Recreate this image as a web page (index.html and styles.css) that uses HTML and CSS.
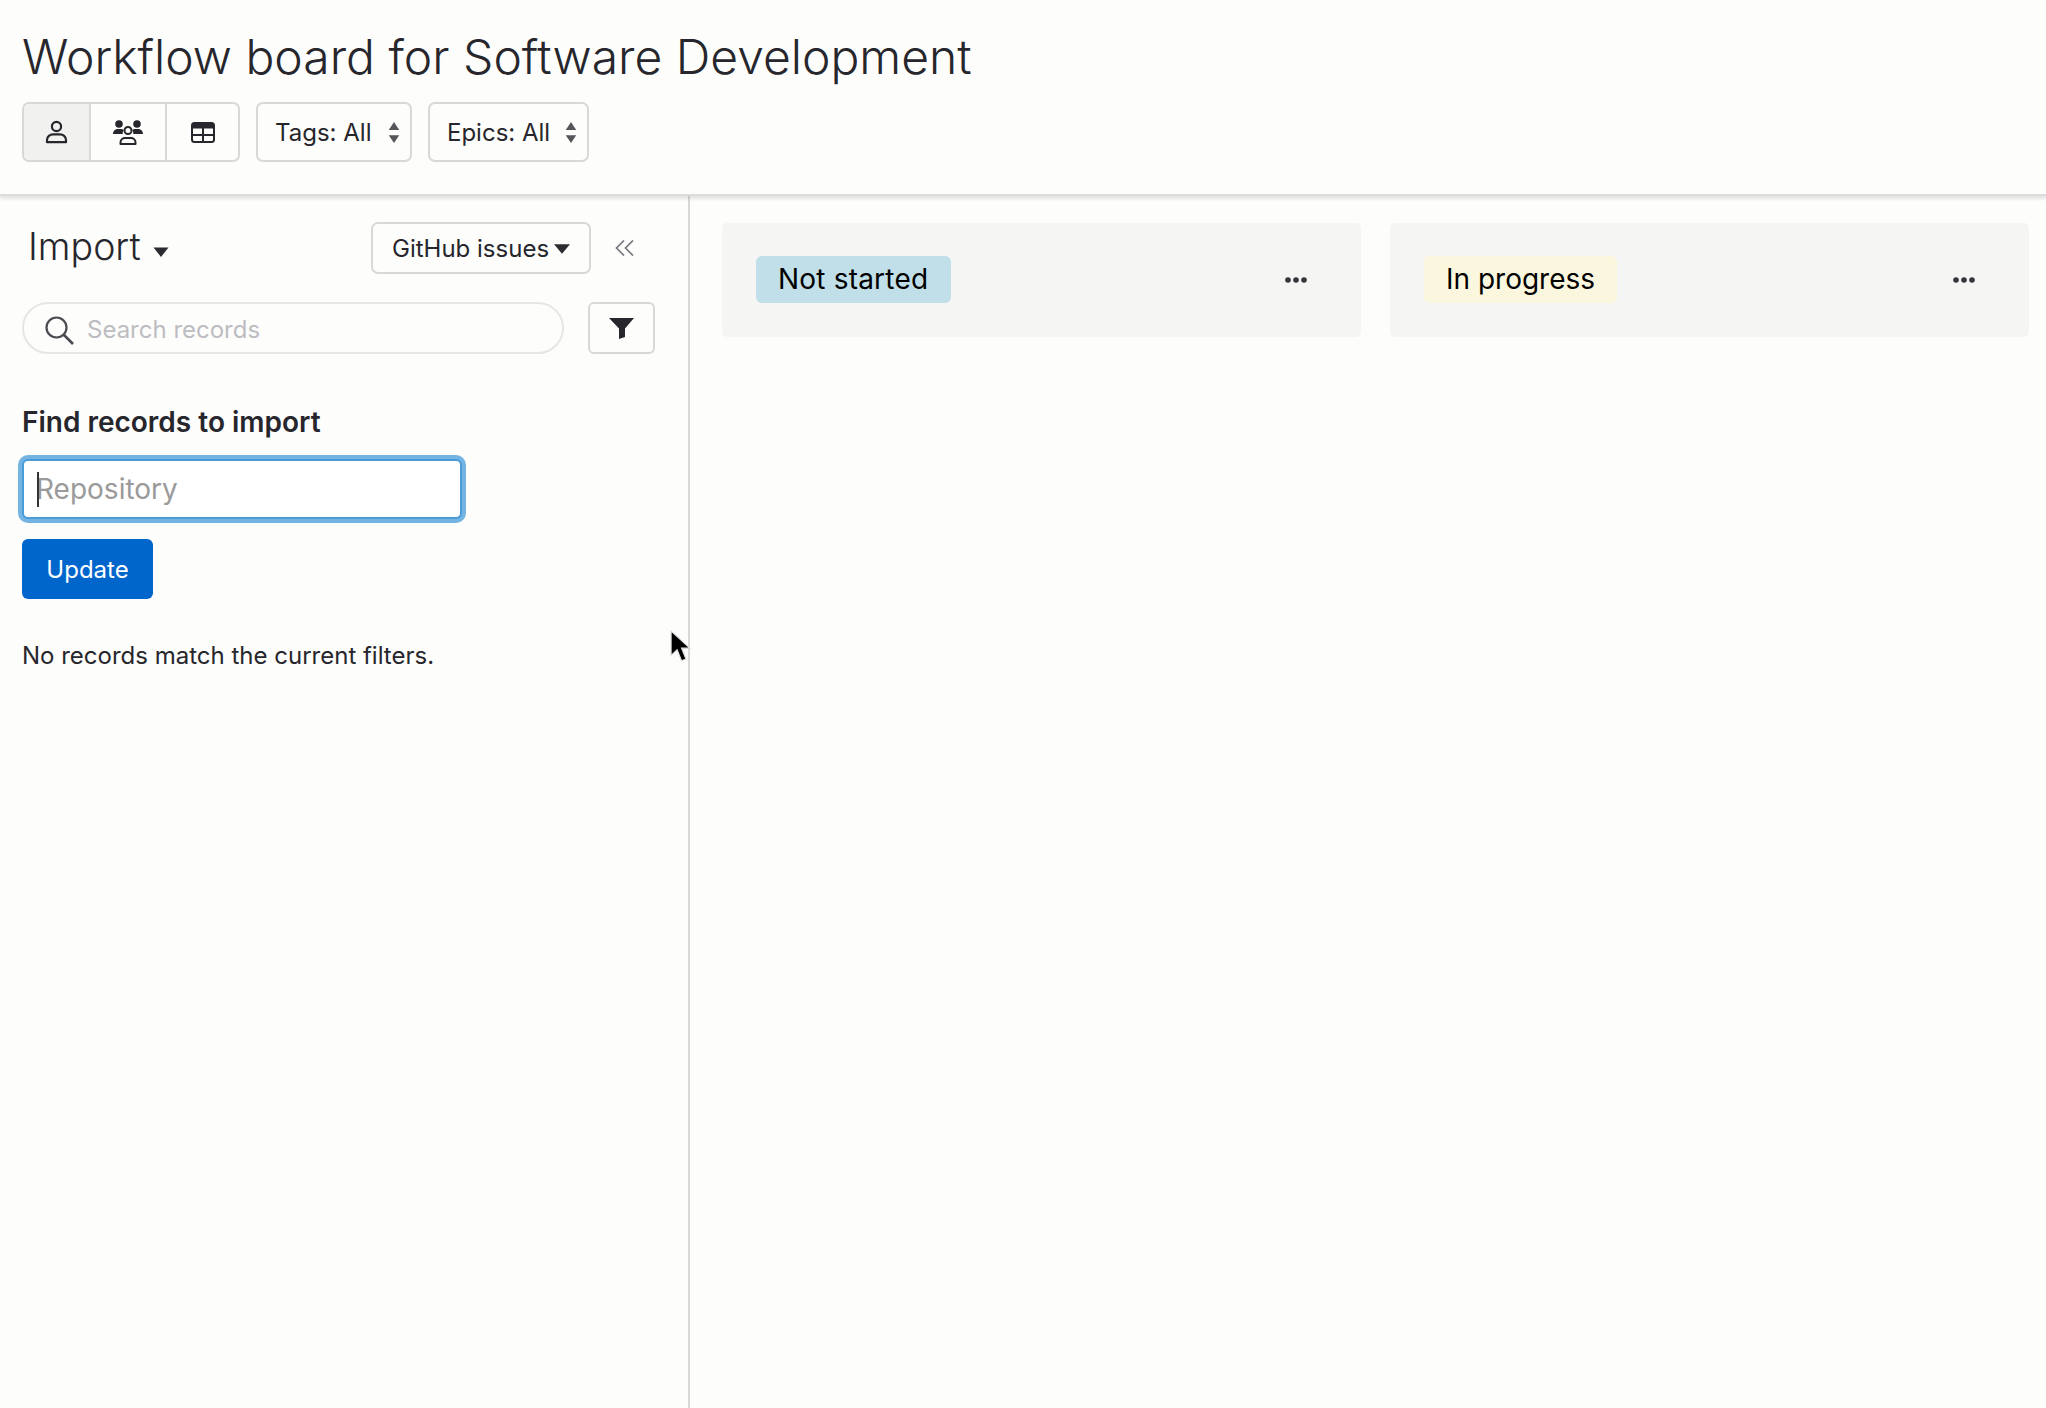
FILE: index.html
```html
<!DOCTYPE html>
<html lang="en">
<head>
  <meta charset="UTF-8" />
  <title>Workflow board for Software Development</title>
  <link rel="stylesheet" href="styles.css">
</head>
<body>

  <!-- Header -->
  <header class="top">
    <h1 class="title">Workflow board for Software Development</h1>
    <div class="toolbar">
      <div class="view-group">
        <div class="view-btn view-me active">
          <svg width="23" height="24" viewBox="0 0 23 24"><circle cx="11.5" cy="6.5" r="4.6" fill="none" stroke="#26262c" stroke-width="2.2"/><path d="M2 22.2h19v-2.2c0-3.4-3-5.6-6-5.6H8c-3 0-6 2.2-6 5.6z" fill="none" stroke="#26262c" stroke-width="2.2" stroke-linejoin="round"/></svg>
        </div>
        <div class="view-btn view-team">
          <svg width="30" height="25" viewBox="0 0 30 25"><circle cx="6" cy="4" r="3.8" fill="#26262c"/><circle cx="24" cy="4" r="3.8" fill="#26262c"/><path d="M0 14c0-3.500 2.500-5 5-5h3c1 0 2 .4 2.700 1-.8 1.200-1.100 2.600-.9 4z" fill="#26262c"/><path d="M30 14c0-3.500-2.500-5-5-5h-3c-1 0-2 .4-2.700 1 .8 1.200 1.100 2.600.9 4z" fill="#26262c"/><circle cx="15" cy="10.500" r="3.500" fill="none" stroke="#26262c" stroke-width="2"/><path d="M7.500 24h15v-1.500c0-2.800-2.300-4.500-4.500-4.500h-6c-2.200 0-4.500 1.700-4.500 4.500z" fill="none" stroke="#26262c" stroke-width="2" stroke-linejoin="round"/></svg>
        </div>
        <div class="view-btn view-table">
          <svg width="24" height="21" viewBox="0 0 24 21"><rect x="1" y="1" width="22" height="19" rx="2.500" fill="none" stroke="#26262c" stroke-width="2"/><path d="M1 3.500a2.500 2.500 0 0 1 2.500-2.500h17a2.500 2.500 0 0 1 2.500 2.500v3h-22z" fill="#26262c"/><path d="M12 6v14M1 13h22" stroke="#26262c" stroke-width="2"/></svg>
        </div>
      </div>
      <div class="select select-tags">
        <span>Tags: All</span>
        <svg class="sort" width="12" height="21" viewBox="0 0 11 20"><path d="M5.500 0l5 7.500h-10zM5.500 20l-5-7.500h10z" fill="#55555a"/></svg>
      </div>
      <div class="select select-epics">
        <span>Epics: All</span>
        <svg class="sort" width="12" height="21" viewBox="0 0 11 20"><path d="M5.500 0l5 7.500h-10zM5.500 20l-5-7.500h10z" fill="#55555a"/></svg>
      </div>
    </div>
  </header>

  <div class="main">
    <!-- Sidebar -->
    <aside class="side">
      <div class="side-head">
        <div class="import-title">Import</div>
        <svg class="import-caret" width="16" height="10" viewBox="0 0 15 10"><path d="M0 .5h15l-7.500 9.500z" fill="#2b2b30"/></svg>
        <div class="source-btn">
          <span>GitHub issues</span>
          <svg width="16" height="10" viewBox="0 0 15 9"><path d="M0 0h15l-7.500 9z" fill="#2b2b30"/></svg>
        </div>
        <svg class="collapse" width="19" height="16" viewBox="0 0 19 16"><path d="M9 .5L1.500 8 9 15.500M18 .5L10.500 8 18 15.500" fill="none" stroke="#777780" stroke-width="1.700"/></svg>
      </div>

      <div class="search-row">
        <div class="search">
          <svg class="search-icon" width="29" height="29" viewBox="0 0 29 29"><circle cx="11.500" cy="11.500" r="10" fill="none" stroke="#4a4a50" stroke-width="2.200"/><path d="M18.500 18.500L28 28" stroke="#4a4a50" stroke-width="2.600"/></svg>
          <span>Search records</span>
        </div>
        <div class="filter-btn">
          <svg width="25" height="21" viewBox="0 0 25 21"><path d="M0 0h25l-9 10.500V19l-6 2V10.500z" fill="#26262c"/></svg>
        </div>
      </div>

      <h2 class="find-title">Find records to import</h2>
      <div class="repo-wrap">
        <input class="repo" type="text" placeholder="Repository">
        <span class="text-caret"></span>
      </div>
      <button class="update">Update</button>
      <p class="empty">No records match the current filters.</p>
    </aside>

    <!-- Board -->
    <section class="board">
      <div class="column">
        <div class="pill pill-blue">Not started</div>
        <svg class="dots" width="22" height="6" viewBox="0 0 22 6"><circle cx="3" cy="3" r="2.800" fill="#34343a"/><circle cx="11" cy="3" r="2.800" fill="#34343a"/><circle cx="19" cy="3" r="2.800" fill="#34343a"/></svg>
      </div>
      <div class="column">
        <div class="pill pill-yellow">In progress</div>
        <svg class="dots" width="22" height="6" viewBox="0 0 22 6"><circle cx="3" cy="3" r="2.800" fill="#34343a"/><circle cx="11" cy="3" r="2.800" fill="#34343a"/><circle cx="19" cy="3" r="2.800" fill="#34343a"/></svg>
      </div>
    </section>
  </div>

  <!-- Mouse pointer -->
  <svg class="pointer" width="22" height="33" viewBox="0 0 20 30"><path d="M1 1v22l5.500-5 4 10 4-1.700-4-9.800H18z" fill="#000" stroke="#ddd" stroke-width="1"/></svg>
</body>
</html>
```

FILE: styles.css
```css
* { margin: 0; padding: 0; box-sizing: border-box; }
html, body {
  width: 100%;
  height: 100%;
  background-color: #fdfdfb;
  color: #26262c;
  font-family: "Inter", "Liberation Sans", sans-serif;
  overflow: hidden;
}
body {
  position: relative;
  display: flex;
  flex-direction: column;
}

/* Header */
.top {
  height: 196px;
  padding: 28px 0 0 22px;
  border-bottom: 2px solid #dcdcdc;
  box-shadow: 0 3px 3px rgba(0, 0, 0, 0.1);
  position: relative;
}
.title {
  font-size: 48px;
  font-weight: 300;
  line-height: 58px;
}
.toolbar {
  display: flex;
  margin-top: 16px;
  height: 60px;
}
.view-group {
  display: flex;
  width: 218px;
  border: 2px solid #d8d8d8;
  border-radius: 7px;
  overflow: hidden;
}
.view-btn {
  display: flex;
  align-items: center;
  justify-content: center;
}
.view-btn + .view-btn { border-left: 2px solid #d8d8d8; }
.view-me { width: 65px; }
.view-team { width: 76px; }
.view-table { flex: 1; }
.active { background: #f1f1ef; }

.select {
  display: flex;
  align-items: center;
  justify-content: space-between;
  border: 2px solid #d8d8d8;
  border-radius: 7px;
  font-size: 24px;
  padding: 0 10px 0 17px;
  height: 60px;
}
.select-tags { width: 156px; margin-left: 16px; }
.select-epics { width: 161px; margin-left: 16px; }

/* Sidebar */
.main {
  flex: 1;
  display: flex;
  min-height: 0;
}
.side {
  width: 690px;
  flex-shrink: 0;
  border-right: 2px solid #d8d8d8;
  padding: 26px 33px 0 22px;
}
.side-head {
  display: flex;
  align-items: center;
  height: 52px;
}
.import-title {
  font-size: 37.5px;
  font-weight: 300;
  margin: -3px 0 0 6px;
}
.import-caret { margin: 8px 0 0 12px; }
.source-btn {
  margin-left: auto;
  display: flex;
  align-items: center;
  gap: 5px;
  width: 220px;
  height: 52px;
  padding: 1px 0 0 19px;
  border: 2px solid #d8d8d8;
  border-radius: 7px;
  font-size: 24px;
}
.collapse { margin: 0 21px 0 24px; }

.search-row {
  display: flex;
  margin-top: 28px;
  height: 52px;
}
.search {
  width: 542px;
  display: flex;
  align-items: center;
  gap: 13px;
  padding: 2px 0 0 21px;
  border: 2px solid #e6e6e4;
  border-radius: 26px;
  font-size: 24px;
  color: #bcbcc2;
}
.search-icon { margin-top: 3px; }
.filter-btn {
  margin-left: auto;
  width: 67px;
  display: flex;
  align-items: center;
  justify-content: center;
  border: 2px solid #d8d8d8;
  border-radius: 6px;
}

.find-title {
  margin-top: 51px;
  font-size: 28px;
  font-weight: 600;
  line-height: 34px;
}
.repo-wrap {
  position: relative;
  width: 440px;
  margin-top: 20px;
}
.repo {
  display: block;
  width: 100%;
  height: 60px;
  padding: 0 12px;
  border: 2px solid #4a9cd8;
  border-radius: 6px;
  box-shadow: 0 0 0 4px #74b4e2;
  background: #fff;
  font-family: inherit;
  font-size: 28px;
  outline: none;
}
.repo::placeholder { color: #9a9a9a; opacity: 1; }
.text-caret {
  position: absolute;
  left: 15px;
  top: 13px;
  width: 2px;
  height: 35px;
  background: #333;
}
.update {
  display: block;
  margin-top: 20px;
  width: 131px;
  height: 60px;
  background: #0066cc;
  color: #fff;
  border: none;
  border-radius: 6px;
  font-family: inherit;
  font-size: 24px;
}
.empty {
  margin-top: 42px;
  font-size: 24px;
  line-height: 30px;
}

/* Board */
.board {
  flex: 1;
  display: flex;
  gap: 29px;
  padding: 27px 0 0 32px;
}
.column {
  width: 639px;
  height: 114px;
  padding: 0 54px 2px 34px;
  display: flex;
  align-items: center;
  justify-content: space-between;
  background: #f5f5f3;
  border-radius: 5px;
}
.pill {
  height: 47px;
  padding: 0 22px;
  display: flex;
  align-items: center;
  border-radius: 6px;
  font-size: 28px;
  color: #000;
}
.pill-blue { background: #c0dfe8; letter-spacing: 0.2px; padding-right: 23px; }
.pill-yellow { background: #fbf7de; }
.dots { margin-top: 2px; }

.pointer {
  position: absolute;
  left: 670px;
  top: 630px;
}
```
